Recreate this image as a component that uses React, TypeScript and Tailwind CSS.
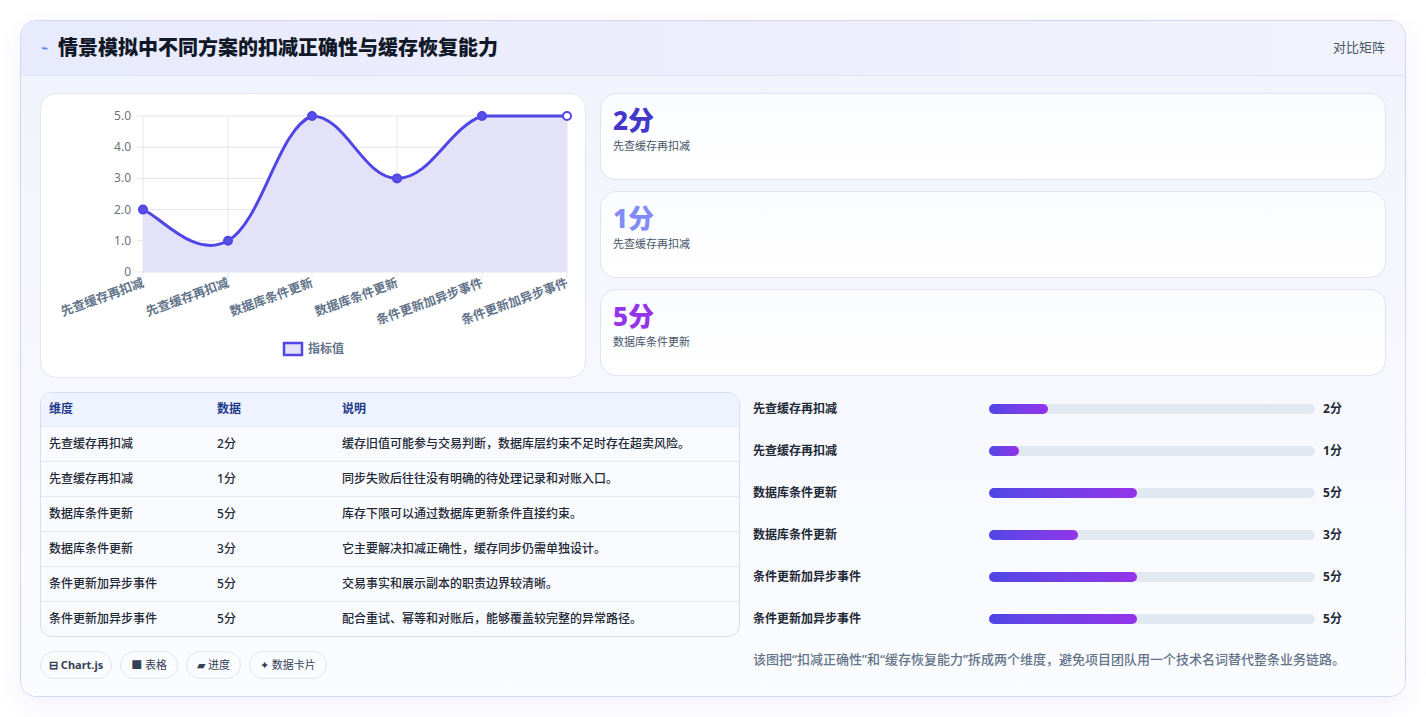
import React from "react";

const font = { fontFamily: '"Noto Sans", "Noto Sans CJK SC", sans-serif' };

const labels = ["先查缓存再扣减", "先查缓存再扣减", "数据库条件更新", "数据库条件更新", "条件更新加异步事件", "条件更新加异步事件"];
const values = [2, 1, 5, 3, 5, 5];
const notes = [
  "缓存旧值可能参与交易判断，数据库层约束不足时存在超卖风险。",
  "同步失败后往往没有明确的待处理记录和对账入口。",
  "库存下限可以通过数据库更新条件直接约束。",
  "它主要解决扣减正确性，缓存同步仍需单独设计。",
  "交易事实和展示副本的职责边界较清晰。",
  "配合重试、幂等和对账后，能够覆盖较完整的异常路径。",
];

function Chart() {
  const xs = [102, 187, 271, 356, 441, 526];
  const y = (v: number) => 22 + (5 - v) * 31.2;
  const pts = values.map((v, i) => [xs[i], y(v)]);
  const clamp = (v: number, a: number, b: number) => Math.min(Math.max(v, Math.min(a, b)), Math.max(a, b));
  let d = `M${pts[0][0]},${pts[0][1]}`;
  for (let i = 0; i < pts.length - 1; i++) {
    const p0 = pts[i - 1] || pts[i];
    const p1 = pts[i];
    const p2 = pts[i + 1];
    const p3 = pts[i + 2] || p2;
    const t = 0.2;
    const lo = 22;
    const hi = 178;
    const c1 = [p1[0] + (p2[0] - p0[0]) * t, clamp(p1[1] + (p2[1] - p0[1]) * t, lo, hi)];
    const c2 = [p2[0] - (p3[0] - p1[0]) * t, clamp(p2[1] - (p3[1] - p1[1]) * t, lo, hi)];
    if (p2[1] === p3[1] && i === pts.length - 2) c2[1] = p2[1];
    if (p1[1] === p2[1]) { c1[1] = p1[1]; c2[1] = p2[1]; }
    d += ` C${c1[0]},${c1[1]} ${c2[0]},${c2[1]} ${p2[0]},${p2[1]}`;
  }
  const area = `${d} L526,178 L102,178 Z`;
  return (
    <svg width="545" height="284" viewBox="0 0 545 284" style={font}>
      {[0, 1, 2, 3, 4, 5].map((v) => (
        <g key={v}>
          <line x1="96" x2="526" y1={y(v)} y2={y(v)} stroke="#e3e3ef" />
          <text x="90" y={y(v) + 4} textAnchor="end" fontSize="12" fill="#6b7280">
            {v === 0 ? "0" : v.toFixed(1)}
          </text>
        </g>
      ))}
      {xs.map((x) => (
        <line key={x} x1={x} x2={x} y1="22" y2="184" stroke="#e6e6f0" />
      ))}
      <path d={area} fill="#e4e2f8" />
      <path d={d} fill="none" stroke="#4f46e5" strokeWidth="3" />
      {pts.map((p, i) => (
        <circle key={i} cx={p[0]} cy={p[1]} r="4" fill={i === 5 ? "#fff" : "#5b50e6"} stroke="#4f46e5" strokeWidth="2" />
      ))}
      {xs.map((x, i) => (
        <text key={i} x={x + 2} y="193" textAnchor="end" fontSize="12.5" fontWeight="700" fill="#64748b" transform={`rotate(-20 ${x} 193)`}>
          {labels[i]}
        </text>
      ))}
      <rect x="243" y="249" width="18" height="12" fill="#e4e2f8" stroke="#4f46e5" strokeWidth="2.5" />
      <text x="267" y="259" fontSize="12" fontWeight="600" fill="#64748b">指标值</text>
    </svg>
  );
}

export default function App() {
  const stats = [
    { v: "2分", l: "先查缓存再扣减", c: "text-[#4338ca]" },
    { v: "1分", l: "先查缓存再扣减", c: "text-[#818cf8]" },
    { v: "5分", l: "数据库条件更新", c: "text-[#9333ea]" },
  ];
  return (
    <div className="min-h-screen bg-white p-5" style={font}>
      <div className="rounded-2xl border border-[#d4d7f3] bg-[#f5f7fd] shadow-[0_8px_24px_rgba(79,70,229,0.08)] overflow-hidden">
        <div className="h-[55px] flex items-center justify-between px-5 bg-gradient-to-r from-[#e8eafd] to-[#f2f2fc] border-b border-[#dfe3f5]">
          <div className="flex items-center gap-2.5">
            <span className="text-[#4f6ef0] text-xs">⌁</span>
            <h1 className="text-[20px] font-extrabold text-[#111827]">情景模拟中不同方案的扣减正确性与缓存恢复能力</h1>
          </div>
          <span className="text-[13px] text-[#475569]">对比矩阵</span>
        </div>
        <div className="px-[19px] pt-[17px] pb-[17px] bg-gradient-to-b from-[#f2f4fd] to-[#fbfcfe]">
          <div className="flex gap-[14px]">
            <div className="w-[546px] h-[285px] rounded-2xl border border-[#e3e6f3] bg-white">
              <Chart />
            </div>
            <div className="flex-1 flex flex-col gap-[11px]">
              {stats.map((s, i) => (
                <div key={i} className="h-[87px] rounded-2xl border border-[#dfe3f5] bg-gradient-to-b from-[#fbfcff] to-white px-3 pt-2.5">
                  <div className={`text-[26px] font-extrabold leading-8 ${s.c}`}>{s.v}</div>
                  <div className="text-[11px] text-[#475569] mt-0.5">{s.l}</div>
                </div>
              ))}
            </div>
          </div>
          <div className="flex gap-[13px] mt-[14px]">
            <div className="w-[700px]">
              <div className="rounded-xl border border-[#d7dcef] overflow-hidden bg-[#f8fafd]">
                <table className="w-full text-[12px] text-[#1f2937]">
                  <thead>
                    <tr className="bg-[#eef3ff] text-[#1e3a8a] h-[33px] text-left">
                      <th className="pl-2 w-[176px] font-semibold">维度</th>
                      <th className="w-[125px] font-semibold">数据</th>
                      <th className="font-semibold">说明</th>
                    </tr>
                  </thead>
                  <tbody>
                    {labels.map((l, i) => (
                      <tr key={i} className="h-[35px] border-t border-[#e2e7f0] font-medium">
                        <td className="pl-2">{l}</td>
                        <td>{values[i]}分</td>
                        <td>{notes[i]}</td>
                      </tr>
                    ))}
                  </tbody>
                </table>
              </div>
              <div className="flex gap-2 mt-3.5 text-[11px] text-[#334155]">
                <span className="h-7 px-2 rounded-full border border-[#e2e5f0] flex items-center font-bold">⊟ Chart.js</span>
                <span className="h-7 px-2.5 rounded-full border border-[#e2e5f0] flex items-center">■ 表格</span>
                <span className="h-7 px-2.5 rounded-full border border-[#e2e5f0] flex items-center">▰ 进度</span>
                <span className="h-7 px-2.5 rounded-full border border-[#e2e5f0] flex items-center">✦ 数据卡片</span>
              </div>
            </div>
            <div className="flex-1 -mt-1">
              {labels.map((l, i) => (
                <div key={i} className="h-[42px] flex items-center">
                  <span className="w-[236px] text-[12px] font-semibold text-[#1f2937]">{l}</span>
                  <div className="w-[326px] h-[10px] rounded-full bg-[#e2e8f0]">
                    <div className="h-full rounded-full bg-gradient-to-r from-[#4f46e5] to-[#9333ea]" style={{ width: `${(values[i] / 11) * 100}%` }} />
                  </div>
                  <span className="ml-2 text-[12px] font-bold text-[#1f2937]">{values[i]}分</span>
                </div>
              ))}
              <p className="mt-2.5 text-[13px] font-medium text-[#64748b]">该图把“扣减正确性”和“缓存恢复能力”拆成两个维度，避免项目团队用一个技术名词替代整条业务链路。</p>
            </div>
          </div>
        </div>
      </div>
    </div>
  );
}
